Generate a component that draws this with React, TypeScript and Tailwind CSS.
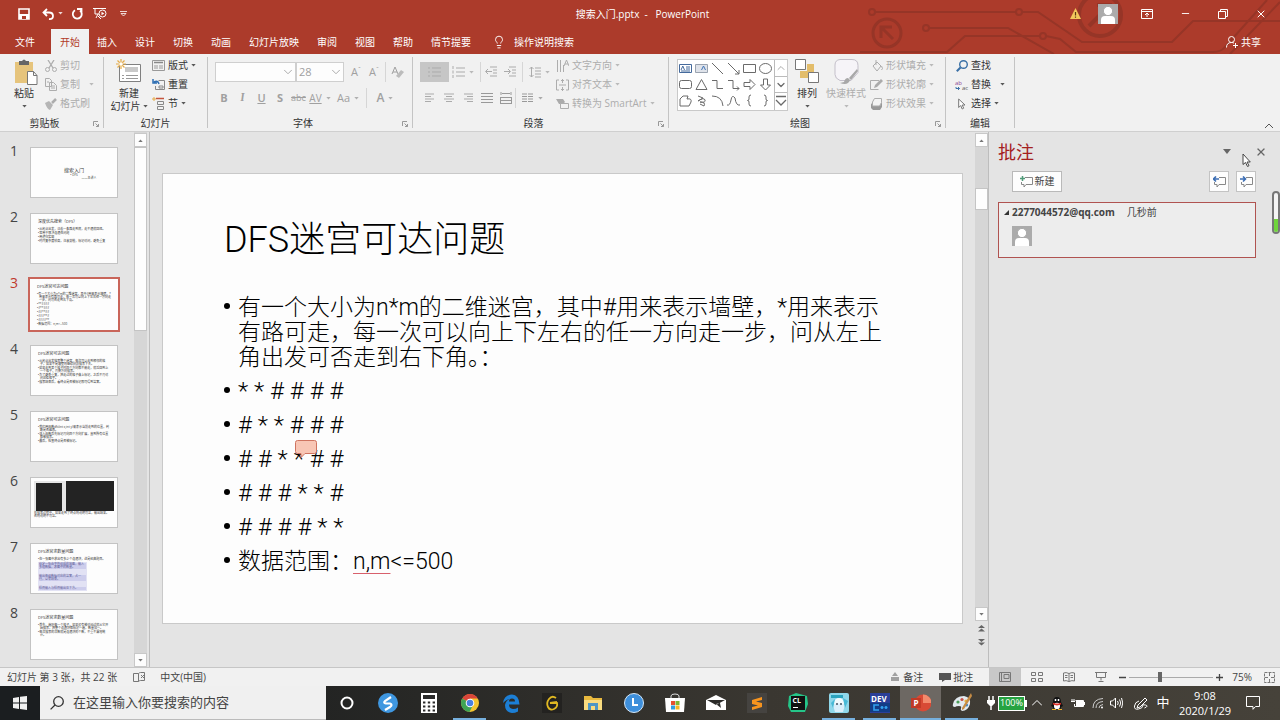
import { useState, type ReactNode } from "react";
import { ChevronDown, ChevronUp, Lightbulb, Minus, Search, X } from "lucide-react";

const tabs = ["文件", "开始", "插入", "设计", "切换", "动画", "幻灯片放映", "审阅", "视图", "帮助", "情节提要"];

const maze = ["* * # # # #", "# * * # # #", "# # * * # #", "# # # * * #", "# # # # * *"];

type Thumb = { title?: string; lines?: string[]; kind?: "cover" | "code" | "quote" };

const thumbs: Thumb[] = [
  { kind: "cover", title: "搜索入门" },
  { title: "深度优先搜索（DFS）", lines: ["从起点出发，沿着一条路走到底，走不通就回退。", "常用于解决连通性问题", "用递归实现", "时间复杂度较高，注意剪枝，标记访问，避免重复"] },
  {
    title: "DFS迷宫可达问题",
    lines: ["有一个大小为n*m的二维迷宫，其中#用来表示墙壁，*用来表示有路可走，每一次可以向上下左右任一方向走一步，问可否走到右下角。", "**####", "#**###", "##**##", "###**#", "####**", "数据范围：n,m<=500"],
  },
  {
    title: "DFS迷宫可达问题",
    lines: ["从起点出发搜索整个迷宫，每次可以走到相邻的格子，如果不是墙壁则继续向前搜索下去。", "如果走到某个格子时四个方向都不能走，就返回到上一个格子，再换方向搜索。", "为了避免重复，把走过的格子做上标记，之后不再访问这些格子。", "搜索结束后，看终点是否被标记即可得到答案。"],
  },
  { title: "DFS迷宫可达问题", lines: ["我们用函数dfs(int x,int y)来表示当前走到的位置，判断是否越界。", "进入函数后先标记再向四个方向扩展，直到所有位置都被搜索。", "最后，检查终点是否被标记。"] },
  { kind: "code" },
  { kind: "quote", title: "DFS迷宫求数量问题", lines: ["在一张图中求出有多少个连通块，这是经典题目。"] },
  { title: "DFS迷宫求数量问题", lines: ["首先，遍历每一个格子，如果没有被访问过就从它开始搜索，把整个连通块都标记一遍，数量加一。", "每次搜索的次数就是连通块的个数，不重不漏地统计。"] },
];

function Svg({ w, h, vb, children, className = "" }: { w: number; h: number; vb?: string; children: ReactNode; className?: string }) {
  return (
    <svg width={w} height={h} viewBox={vb ?? `0 0 ${w} ${h}`} fill="none" stroke="currentColor" aria-hidden="true" className={`shrink-0 ${className}`}>
      {children}
    </svg>
  );
}

function Caret({ className = "" }: { className?: string }) {
  return (
    <Svg w={5} h={3} className={className}>
      <path d="M.3 0h4.400L2.500 2.600z" fill="currentColor" fillOpacity=".8" stroke="none" />
    </Svg>
  );
}

function Person({ className = "" }: { className?: string }) {
  return (
    <Svg w={20} h={20} className={className}>
      <path d="M0 0h20v20H0z" fill="#ababab" stroke="none" />
      <path d="M3 20v-4q0-4 4-4h6q4 0 4 4v4z" fill="#fff" stroke="none" />
      <circle cx="10" cy="7" r="4.600" fill="#fff" stroke="#ababab" />
    </Svg>
  );
}

function Circuit() {
  return (
    <svg className="absolute right-0 top-0 h-full" width="440" height="54" viewBox="0 0 440 54" fill="none" stroke="#963527" strokeWidth="2" aria-hidden="true">
      <circle cx="32" cy="12" r="3" />
      <path d="M35 12h141M182 12h16l44 30h90l21-21h87" />
      <circle cx="179" cy="12" r="3" />
      <circle cx="86" cy="28" r="3" />
      <path d="M89 28h79l46 26M20 52h87l18-16h75M206 36l14 3 16 13h137q8 0 12-5L427 0M390 54l50-52" />
      <circle cx="203" cy="36" r="3" />
      <circle cx="47" cy="33" r="14" strokeWidth="3" />
      <path d="M41 38V27h11M41 27l12 12" strokeWidth="3" />
      <circle cx="260" cy="15" r="21" strokeWidth="4" />
      <path d="M249 26l20-20M257 5h13v13" strokeWidth="4" />
    </svg>
  );
}

function TitleBar() {
  const [active, setActive] = useState("开始");
  return (
    <header className="relative h-[54px] shrink-0 bg-[#ac3b2b] text-white">
      <Circuit />
      <div className="relative flex h-[27px] items-center">
        <div className="flex flex-1 items-center pl-[18px]">
          <button aria-label="保存"><Svg w={12} h={12}><path d="M1 1h10v10H1z" strokeWidth="1.600" /><path d="M1 6h10v5H1z" fill="currentColor" stroke="none" /><path d="M4 8h4v3H4z" fill="#ac3b2b" stroke="none" /></Svg></button>
          <button aria-label="撤消" className="ml-3 flex items-center gap-1"><Svg w={12} h={12}><path d="M5 1L1.500 4.500L5 8M2 4.500h5q4 0 4 3.500t-4 3" strokeWidth="1.800" /></Svg><Caret /></button>
          <button aria-label="重复" className="ml-2"><Svg w={12} h={12}><path d="M4 2.200A4.500 4.500 0 1 0 9 2.500M6 1h4.500v4.500" strokeWidth="1.800" /></Svg></button>
          <button aria-label="从头开始" className="ml-[10px]"><Svg w={15} h={13}><path d="M0 1.500h13M2 2v5h4M5 7l-2 4M5 9l3 3" /><circle cx="9.500" cy="6.500" r="3.500" /><path d="M8.500 4.800v3.400l2.800-1.700z" fill="currentColor" stroke="none" /></Svg></button>
          <button aria-label="自定义快速访问工具栏" className="ml-3"><Svg w={7} h={6}><path d="M0 .5h7M1 2.500h5l-2.500 2.500z" strokeWidth=".8" /></Svg></button>
        </div>
        <h1 className="text-[10px] leading-4">搜索入门.pptx&nbsp; -&nbsp;&nbsp; PowerPoint</h1>
        <div className="flex flex-1 items-center justify-end pr-[13px]">
          <button aria-label="警告"><Svg w={11} h={11}><path d="M5.500 0L11 11H0z" fill="#f2c75c" stroke="none" /><path d="M5.500 4v3.500M5.500 8.500v1.200" stroke="#5a3a10" strokeWidth="1.200" /></Svg></button>
          <button aria-label="帐户" className="ml-[17px]"><Person /></button>
          <button aria-label="功能区显示选项" className="ml-[23px]"><Svg w={12} h={10}><path d="M.5.500h11v9H.5zM.5 2.500h11M6 8V4.500M4 6l2-2 2 2" /></Svg></button>
          <button aria-label="最小化" className="ml-[27px]"><Minus size={11} strokeWidth={2} /></button>
          <button aria-label="还原" className="ml-[27px]"><Svg w={10} h={10}><path d="M.5 2.500h7v7h-7zM2.500 2.500v-2h7v7h-2" /></Svg></button>
          <button aria-label="关闭" className="ml-[27px]"><X size={12} strokeWidth={2} /></button>
        </div>
      </div>
      <nav className="relative flex h-[27px] items-stretch pl-[6px] pt-[2px] text-[10px] leading-[22px]">
        {tabs.map((t) => (
          <button
            key={t}
            onClick={() => setActive(t)}
            className={`px-[9px] ${t === active ? "mx-[-1px] bg-[#f1f1f1] text-[#b23a28]" : ""} ${t === "文件" ? "mr-[8px]" : ""}`}
          >
            {t}
          </button>
        ))}
        <button className="ml-3 flex items-center gap-2">
          <Lightbulb size={14} strokeWidth={1.6} />
          操作说明搜索
        </button>
        <button className="ml-auto mr-[19px] flex items-center gap-[3px]">
          <Svg w={12} h={12}><circle cx="5.500" cy="3.500" r="3" /><path d="M.5 11.500q0-5 5-5 1.500 0 2.500.7M9.500 7v5M7 9.500h5" /></Svg>
          共享
        </button>
      </nav>
    </header>
  );
}

function Group({ label, launcher = false, className, children }: { label: string; launcher?: boolean; className: string; children: ReactNode }) {
  return (
    <section aria-label={label} className={`flex shrink-0 pt-[2px] ${className}`}>
      <div className="flex min-w-0 flex-1 flex-col justify-between">
        <div className="flex h-[57px]">{children}</div>
        <div className="flex h-[15px] items-center leading-[15px] text-[#333]">
          <span className="flex-1 text-center">{label}</span>
          {launcher && (
            <button aria-label={`${label}设置`} className="flex w-[14px] justify-end pr-1 text-[#999]">
              <Svg w={6} h={6}><path d="M.5 5V.500H5M2.500 2.500l3 3M5.500 3v2.500H3" /></Svg>
            </button>
          )}
        </div>
      </div>
      <div className="mb-[3px] mt-[1px] w-px bg-[#c4c4c4]" />
    </section>
  );
}

function Item({ icon, label, caret, wide, off }: { icon: ReactNode; label: string; caret?: boolean; wide?: boolean; off?: boolean }) {
  return (
    <button className={`flex h-[19px] items-center whitespace-nowrap ${off ? "text-[#adadad]" : "text-[#333]"}`}>
      <span className="mr-[3px] flex w-[13px] justify-center">{icon}</span>
      {label}
      {caret && <Caret className={wide ? "ml-[9px]" : "ml-[3px]"} />}
    </button>
  );
}

function Big({ icon, label, second, off, className }: { icon: ReactNode; label: string; second?: string; off?: boolean; className: string }) {
  return (
    <button className={`flex flex-col items-center whitespace-nowrap pt-[3px] leading-[13px] ${off ? "text-[#adadad]" : "text-[#333]"} ${className}`}>
      <span className="flex h-[28px] items-start">{icon}</span>
      {label}
      <span className="flex h-[13px] items-center gap-[2px]">
        {second}
        <Caret />
      </span>
    </button>
  );
}

function Sep() {
  return <div className="h-5 w-px shrink-0 bg-[#d6d6d6]" />;
}

function Tool({ label, className = "", children }: { label: string; className?: string; children: ReactNode }) {
  return (
    <button aria-label={label} className={`flex h-5 shrink-0 items-center justify-center gap-1 ${className}`}>
      {children}
    </button>
  );
}

const lines = (d: string, w = 12) => <Svg w={w} h={12}><path d={d} /></Svg>;

const shapes: [string, string][] = [
  ["直线", "M2 2l11 11"],
  ["箭头", "M2 2l11 11M13 9v4H9"],
  ["矩形", "M1.500 3.500h12v8h-12z"],
  ["椭圆", "M1.500 7.500a6 5 0 1 0 12 0a6 5 0 1 0-12 0"],
  ["圆角矩形", "M3.500 3.500h8q2 0 2 2v4q0 2-2 2h-8q-2 0-2-2v-4q0-2 2-2z"],
  ["三角形", "M7.500 2.500l5.500 10H2z"],
  ["肘形连接符", "M2 3.500h5v8h6"],
  ["肘形箭头", "M2 3.500h5v8h6M11 9.500l2 2-2 2"],
  ["右箭头", "M2 5.500h6v-3l5 5-5 5v-3H2z"],
  ["下箭头", "M5.500 2v6h-3l5 5 5-5h-3V2z"],
  ["任意多边形", "M2 6l3-3h5l-1 3q5-1 4 3l-2 4H2z"],
  ["自由曲线", "M4 3l5 2-5 3q6-4 7-1t-5 2q6 0 4 4L6 11"],
  ["弧形", "M2 3q10 0 11 10"],
  ["曲线", "M1 12q3 1 4-5t4-2q1 8 5 7"],
  ["左大括号", "M9 2q-2 0-2 2v2q0 1.500-1.500 1.500Q7 7.500 7 9v2q0 2 2 2"],
  ["右大括号", "M6 2q2 0 2 2v2q0 1.500 1.500 1.500Q8 7.500 8 9v2q0 2-2 2"],
];

function FontGroup() {
  return (
    <Group label="字体" launcher className="w-[205px]">
      <div className="flex flex-col gap-[6px] pl-[7px] pt-[6px] text-[#a0a0a0]">
        <div className="flex items-center">
          <div className="relative h-5 w-[81px] border border-[#cfcfcf] bg-[#fdfdfd]">
            <input aria-label="字体" className="h-full w-full bg-transparent px-1 outline-none" />
            <ChevronDown size={14} strokeWidth={1.5} className="absolute right-0 top-[2px]" />
          </div>
          <div className="relative h-5 w-12 border border-[#cfcfcf] bg-[#fdfdfd]">
            <select aria-label="字号" defaultValue="28" className="h-full w-full appearance-none bg-transparent px-[2px] text-[11px] outline-none">
              <option>28</option>
              <option>36</option>
            </select>
            <ChevronDown size={14} strokeWidth={1.5} className="pointer-events-none absolute right-0 top-[2px]" />
          </div>
          <Tool label="增大字号" className="ml-[5px] w-[14px]"><span className="text-[11px]">A<sup className="text-[7px]">ˆ</sup></span></Tool>
          <Tool label="减小字号" className="ml-1 w-[14px]"><span className="text-[11px]">A<sup className="text-[7px]">ˇ</sup></span></Tool>
          <div className="ml-1"><Sep /></div>
          <Tool label="清除格式" className="ml-[5px]">
            <Svg w={13} h={13}><path d="M1 8l3-7 3 7M2 6h4" /><path d="M5 10l5-6 3 2-5 6z" fill="#bcbcbc" stroke="none" /></Svg>
          </Tool>
        </div>
        <div className="flex items-center text-[11px]">
          <Tool label="加粗" className="w-[18px]"><b>B</b></Tool>
          <Tool label="倾斜" className="w-[19px]"><i className="font-serif font-bold">I</i></Tool>
          <Tool label="下划线" className="w-[19px]"><u className="font-semibold">U</u></Tool>
          <Tool label="文字阴影" className="w-[18px]"><b>S</b></Tool>
          <Tool label="删除线" className="w-[19px]"><s className="text-[9px]">abc</s></Tool>
          <Tool label="字符间距" className="w-[24px]"><u className="text-[10px]">AV</u><Caret /></Tool>
          <Tool label="更改大小写" className="ml-[4px] w-[24px]"><span>Aa</span><Caret /></Tool>
          <div className="ml-[6px]"><Sep /></div>
          <Tool label="字体颜色" className="ml-[6px] w-[24px]"><span className="text-xs font-semibold">A</span><Caret /></Tool>
        </div>
      </div>
    </Group>
  );
}

function ParagraphGroup() {
  return (
    <Group label="段落" launcher className="w-[256px]">
      <div className="flex w-[137px] flex-col gap-[6px] pl-[7px] pt-[6px] text-[#ababab]">
        <div className="flex items-center">
          <Tool label="项目符号" className="w-[29px] bg-[#c6c6c6]">{lines("M0 2h2M4 2h9M0 6h2M4 6h9M0 10h2M4 10h9", 13)}</Tool>
          <Tool label="编号" className="ml-[3px]">{lines("M1 0v3M4 2h9M1 4.500v3M4 6h9M1 9v3M4 10h9", 13)}<Caret /></Tool>
          <div className="ml-[6px]"><Sep /></div>
          <Tool label="减少缩进" className="ml-1">{lines("M5 1h7M8 4h4M8 7h4M5 10h7M7 5.500H1M3 3L.5 5.500 3 8")}</Tool>
          <Tool label="增加缩进" className="ml-[7px]">{lines("M5 1h7M8 4h4M8 7h4M5 10h7M0 5.500h6M4 3l2.500 2.500L4 8")}</Tool>
          <div className="ml-[6px]"><Sep /></div>
          <Tool label="行距" className="ml-[6px]">{lines("M2.500 1v10M.5 3l2-2 2 2M.5 9l2 2 2-2M6 2h6M6 5h6M6 8h6M6 11h6")}<Caret /></Tool>
        </div>
        <div className="flex items-center">
          <Tool label="左对齐" className="w-[19px]">{lines("M1 2h9M1 4.500h6M1 7h9M1 9.500h6")}</Tool>
          <Tool label="居中" className="w-[19px]">{lines("M1 2h10M3 4.500h6M1 7h10M3 9.500h6")}</Tool>
          <Tool label="右对齐" className="w-[19px]">{lines("M2 2h9M5 4.500h6M2 7h9M5 9.500h6")}</Tool>
          <Tool label="两端对齐" className="w-[19px] text-[#999]">{lines("M0 1.500h12M0 4.500h12M0 7.500h12M0 10.500h12")}</Tool>
          <Tool label="分散对齐" className="w-[19px] text-[#999]">{lines("M1 0v3M11 0v3M2 1.500h8M0 5.500h12M0 8.500h12M0 11.500h12M.5 5v7M11.500 5v7")}</Tool>
          <Sep />
          <Tool label="分栏" className="ml-[6px] text-[#999]">{lines("M0 2h5M6 2h5M0 4.500h5M6 4.500h5M0 7h5M6 7h5M0 9.500h5M6 9.500h5")}<Caret /></Tool>
        </div>
      </div>
      <div className="flex flex-col pl-[6px]">
        <Item off caret label="文字方向" icon={<Svg w={13} h={12}><path d="M1.500 0v12M4.500 0v12M7.500 5v7M8 6l2.500-6L13 6M9 4h3" /></Svg>} />
        <Item off caret label="对齐文本" icon={<Svg w={13} h={12}><path d="M3 1H.5v10H3M10 1h2.500v10H10M6.500 0v4M6.500 8v4M5 2l1.500-1.500L8 2M5 10l1.500 1.500L8 10M3 6h7" /></Svg>} />
        <Item off caret label="转换为 SmartArt" icon={<Svg w={13} h={12}><path d="M0 1h7l2 3-2 2H3z" fill="#ababab" stroke="none" /><path d="M4.500 5.500h8v5h-8z" fill="#f1f1f1" /></Svg>} />
      </div>
    </Group>
  );
}

function DrawingGroup() {
  return (
    <Group label="绘图" launcher className="w-[277px]">
      <div className="ml-2 mt-[3px] flex h-[52px] border border-[#c9c9c9] bg-white text-[#6a6a6a]">
        <div className="grid grid-cols-6 content-start">
          <button aria-label="文本框" className="h-[16px] w-[16px]"><Svg w={15} h={15}><path d="M1.500 3.500h12v8h-12zM8 6h4M8 8h4M3 10h9M3 9l1.800-4L6.500 9" stroke="#456a9c" /></Svg></button>
          <button aria-label="竖排文本框" className="h-[16px] w-[16px]"><Svg w={15} h={15}><path d="M1.500 3.500h12v8h-12z" fill="#dfe3ea" stroke="#9aa3b0" /><path d="M7.500 9l2-4 2 4" stroke="#3f74b8" /></Svg></button>
          {shapes.map(([name, d]) => (
            <button key={name} aria-label={name} className="h-[16px] w-[16px]">
              <Svg w={15} h={15}><path d={d} /></Svg>
            </button>
          ))}
        </div>
        <div className="flex w-[13px] flex-col items-center divide-y divide-[#bbb] border-l border-[#bbb]">
          <button aria-label="上一行" className="h-[17px] w-full text-[#aaa]"><ChevronUp size={12} strokeWidth={2} /></button>
          <button aria-label="下一行" className="h-[16px] w-full"><ChevronDown size={12} strokeWidth={2.5} /></button>
          <button aria-label="其他" className="h-[17px] w-full"><Svg w={12} h={14}><path d="M1 1.500h10M1 5l5 5 5-5" strokeWidth="1.300" /></Svg></button>
        </div>
      </div>
      <Big className="ml-[3px] w-[32px]" label="排列" icon={
        <Svg w={24} h={24}><path d="M12 5h7v8h-7zM5 12h8v7H5z" fill="#e3bd6a" stroke="none" /><path d="M.5.500h10v10H.5zM13.500 13.500h10v10h-10z" fill="#fff" stroke="#777" /></Svg>
      } />
      <Big off className="w-[46px]" label="快速样式" icon={
        <Svg w={25} h={26}><path d="M6 .5h12q6 0 6 6v7l-7 8H6q-5-2-5-6V6q0-5 5-5.500z" fill="#f6f4f8" stroke="#c3bfc9" /><path d="M23 10l-8 9 2 2 7-9zM14 19q-3 0-4 4l-4 1q8 3 10-3z" fill="#a8a8a8" stroke="none" /></Svg>
      } />
      <div className="ml-px flex flex-col">
        <Item off caret label="形状填充" icon={<Svg w={12} h={12}><path d="M2 6l4-4 4 4-4 5zM5 0v5M10.500 6q2 3 0 4" /></Svg>} />
        <Item off caret label="形状轮廓" icon={<Svg w={13} h={12}><path d="M9 1.500H.5v9h8" /><path d="M4 9l1-3 6-6 2 2-6 6z" fill="#ababab" stroke="none" /></Svg>} />
        <Item off caret label="形状效果" icon={<Svg w={13} h={12}><path d="M1 5v5l2 2h7l2-3V3l-2 5H3z" fill="#999" stroke="none" /><path d="M4.500.5h7v4l-2 3.500h-7v-4z" fill="#f4f4f4" /></Svg>} />
      </div>
    </Group>
  );
}

function Ribbon() {
  return (
    <div className="flex h-[78px] shrink-0 border-b border-[#cfcfcf] bg-[#f1f1f1] text-[10px]">
      <Group label="剪贴板" launcher className="w-[104px]">
        <Big className="ml-2 w-[32px]" label="粘贴" icon={
          <Svg w={24} h={26} className="ml-1"><path d="M1 3h18v21H1z" fill="#e6c47c" stroke="none" /><path d="M5 2h3q2-3 4 0h3v4H5z" fill="#666" stroke="none" /><path d="M13.500 12.500h6l3.500 4v9h-9.500z" fill="#fff" stroke="#777" /><path d="M19.500 12.500v4H23" stroke="#777" /></Svg>
        } />
        <div className="ml-1 flex flex-col">
          <Item off label="剪切" icon={<Svg w={12} h={12}><path d="M3 0l5 8M9 0L4 8" strokeWidth="1.300" /><circle cx="2.500" cy="9.500" r="2" /><circle cx="9.500" cy="9.500" r="2" /></Svg>} />
          <Item off caret wide label="复制" icon={<Svg w={12} h={13}><path d="M.5.500h4l2 2v6h-6zM4.500 4.500h4l3 3v5h-7zM6 8h4M6 10h4M2 4h2" /></Svg>} />
          <Item off label="格式刷" icon={<Svg w={12} h={12}><path d="M0 5l4-2 4 4-3 5q-3-1-5-7z" fill="#b5b5b5" stroke="none" /><path d="M7 5l4-4" strokeWidth="2.500" /></Svg>} />
        </div>
      </Group>
      <Group label="幻灯片" className="w-[104px]">
        <Big className="ml-[5px] w-[40px]" label="新建" second="幻灯片" icon={
          <Svg w={26} h={24}><path d="M3.500 5.500h21v17h-21z" fill="#fff" stroke="#808080" /><path d="M9 8h13v5H9z" fill="#c9c9c9" stroke="none" /><path d="M6 16.500h2M10 16.500h12M6 19.500h2M10 19.500h12" stroke="#999" /><path d="M5 0v10M0 5h10M1.500 1.500l7 7M8.500 1.500l-7 7" stroke="#e5ab48" strokeWidth="1.200" /><circle cx="5" cy="5" r="1.800" fill="#fff" stroke="none" /></Svg>
        } />
        <div className="ml-[3px] flex flex-col">
          <Item caret label="版式" icon={<Svg w={13} h={11}><path d="M.5.500h12v10H.5z" stroke="#999" /><path d="M2 2.500h9" stroke="#888" strokeWidth="1.500" /><path d="M2 5h4v4H2zM7 5h4v4H7z" fill="#c6c6c6" stroke="none" /></Svg>} />
          <Item label="重置" icon={<Svg w={13} h={12}><path d="M6.500 1.500h6v9h-9V7M7 7h4v2H7z" stroke="#888" /><path d="M7 5q-1-4-5-2M1 0v4h4" stroke="#2f6fb3" strokeWidth="1.500" /></Svg>} />
          <Item caret label="节" icon={<Svg w={13} h={13}><path d="M5.500 4.500h6v3h-6zM5.500 9.500h6v3h-6z" stroke="#888" /><path d="M4 1.500h8" stroke="#c5543c" strokeWidth="1.500" /><path d="M2 0v4M0 2h4" stroke="#e5ab48" /></Svg>} />
        </div>
      </Group>
      <FontGroup />
      <ParagraphGroup />
      <DrawingGroup />
      <Group label="编辑" className="w-[69px]">
        <div className="ml-[9px] flex flex-col">
          <Item label="查找" icon={<Svg w={12} h={12}><circle cx="7.500" cy="4.500" r="3.800" stroke="#3a70a6" strokeWidth="1.400" /><path d="M4.500 7.500L.8 11.200" stroke="#3a70a6" strokeWidth="2" /></Svg>} />
          <Item caret wide label="替换" icon={
            <Svg w={14} h={12} className="overflow-visible"><text x="0" y="6" fontSize="6" fill="#8a4c96" stroke="none">ab</text><text x="7" y="11" fontSize="6" fill="#555" stroke="none">ac</text><path d="M1 8v1.500h3.500M3 8l1.500 1.500L3 11" stroke="#3a70a6" /></Svg>
          } />
          <Item caret label="选择" icon={<Svg w={8} h={12}><path d="M.7 1v8.500l2-2 1.500 3.500 1.500-.8-1.500-3.200h2.800z" stroke="#777" fill="#fff" /></Svg>} />
        </div>
      </Group>
      <button aria-label="折叠功能区" className="mb-[2px] ml-auto mr-[6px] self-end text-[#555]">
        <Svg w={10} h={6}><path d="M1 5l4-4 4 4" /></Svg>
      </button>
    </div>
  );
}

function ArrowBtn({ dir }: { dir: "up" | "down" }) {
  return (
    <button aria-label={dir === "up" ? "向上滚动" : "向下滚动"} className="flex h-[14px] w-full shrink-0 items-center justify-center border border-[#c8c8c8] bg-[#fdfdfd] text-[#555]">
      <Caret className={dir === "up" ? "rotate-180" : ""} />
    </button>
  );
}

function ThumbCard({ t, selected }: { t: Thumb; selected: boolean }) {
  return (
    <span className={`block h-[51px] w-[88px] shrink-0 overflow-hidden bg-[#fdfdfd] text-left text-[3px] leading-[3px] text-[#333] ${selected ? "outline-2 outline-[#c9655a]" : "border border-[#c3c3c3]"}`}>
      {t.kind === "cover" && (
        <span className="flex flex-col items-center pt-[19px]">
          <span className="text-[5px] leading-[6px]">{t.title}</span>
          <span className="mt-px">• DFS</span>
          <span className="ml-[30px]">——主讲人</span>
        </span>
      )}
      {t.kind === "code" && (
        <span className="block px-[3px] pt-[3px]">
          <span className="flex items-end gap-1 bg-[#e6e6e6] pl-[2px]">
            <span className="h-[28px] w-[26px] bg-[#232323]" />
            <span className="h-[30px] flex-1 bg-[#232323]" />
          </span>
          <span className="mt-px block">在搜索过程中，如果走到了终点则说明可达，输出结果。</span>
          <span className="block">否则说明不可达。</span>
        </span>
      )}
      {t.kind !== "cover" && t.kind !== "code" && (
        <span className="block px-[7px] pt-[5px]">
          <span className="mb-[4px] block text-[4px] leading-[5px]">{t.title}</span>
          {t.lines?.map((l, i) => (
            <span key={i} className="mb-px block pl-[2px] -indent-[2px]">•{l}</span>
          ))}
          {t.kind === "quote" && (
            <span className="flex h-[29px] w-[49px] flex-col justify-between bg-[#e2e2f4] p-px text-[#5a5a96]">
              <span className="bg-[#cdcdec]">给定一张由字符组成的地图，输入多组数据，求图中的数量。</span>
              <span className="bg-[#cdcdec]">输出每组数据对应的答案，占一行，以零结束。</span>
              <span className="bg-[#cdcdec]">样例输入与样例输出见下方。</span>
            </span>
          )}
        </span>
      )}
    </span>
  );
}

function Thumbnails() {
  const [current, setCurrent] = useState(2);
  return (
    <aside className="flex w-[150px] shrink-0 border-r border-[#bdbdbd]">
      <ol className="flex flex-1 flex-col gap-[15px] overflow-hidden pt-[15px]">
        {thumbs.map((t, i) => (
          <li key={i}>
            <button onClick={() => setCurrent(i)} className="flex items-start">
              <span className={`-mt-[6px] w-[30px] shrink-0 pl-[10px] text-left text-sm ${i === current ? "text-[#c0392b]" : "text-[#444]"}`}>{i + 1}</span>
              <ThumbCard t={t} selected={i === current} />
            </button>
          </li>
        ))}
      </ol>
      <div className="mr-[2px] flex w-[13px] flex-col bg-[#d6d6d6] pt-px">
        <ArrowBtn dir="up" />
        <div className="h-[184px] border border-[#c4c4c4] bg-[#fdfdfd]" />
        <div className="flex-1" />
        <ArrowBtn dir="down" />
      </div>
    </aside>
  );
}

function Bullet({ className = "", children }: { className?: string; children: ReactNode }) {
  return (
    <li className="flex">
      <span className="mr-2 mt-[8px] size-[6px] shrink-0 rounded-full bg-black" />
      <p className={className}>{children}</p>
    </li>
  );
}

function Slide() {
  return (
    <main className="min-w-0 flex-1 pl-[12px] pr-[12px] pt-[41px]">
      <article className="relative aspect-video w-full border border-[#c9c9c9] bg-[#fdfdfd] px-[61px] pt-[41px] font-['Roboto','Noto_Sans_CJK_SC',sans-serif] font-light text-black">
        <h2 className="text-4xl leading-[50px]">DFS迷宫可达问题</h2>
        <ul className="mt-[30px] flex flex-col gap-[9px] text-[23px] leading-[25px]">
          <Bullet>
            有一个大小为n*m的二维迷宫，其中#用来表示墙壁，*用来表示
            <br />
            有路可走，每一次可以向上下左右的任一方向走一步，问从左上
            <br />
            角出发可否走到右下角。：
          </Bullet>
          {maze.map((row) => (
            <Bullet key={row} className="text-2xl leading-[25px]">{row}</Bullet>
          ))}
          <Bullet>
            数据范围：<span className="underline decoration-[#d8606c] decoration-1 underline-offset-4">n,m</span>&lt;=500
          </Bullet>
        </ul>
        {/* comment marker */}
        <button aria-label="批注标记" className="absolute left-[132px] top-[266px]">
          <Svg w={22} h={19}><path d="M2.500.500h17q2 0 2 2v9q0 2-2 2H10l-4 4v-4H2.500q-2 0-2-2v-9q0-2 2-2z" fill="#f8c6b5" stroke="#cf7460" /></Svg>
        </button>
      </article>
    </main>
  );
}

function Comments() {
  return (
    <aside aria-label="批注" className="relative flex w-[292px] shrink-0 flex-col border-l border-[#bdbdbd] pl-[9px] pr-[24px] text-[10px] text-[#444]">
      <div className="flex h-[39px] items-center">
        <h2 className="flex-1 text-lg leading-6 text-[#a4201f]">批注</h2>
        <button aria-label="任务窗格选项"><Svg w={8} h={5}><path d="M0 0h8L4 5z" fill="#666" stroke="none" /></Svg></button>
        <button aria-label="关闭窗格" className="-mr-[11px] ml-6 text-[#666]"><X size={12} strokeWidth={2.5} /></button>
      </div>
      <div className="flex gap-[7px] pl-[14px]">
        <button className="mr-auto flex h-[21px] w-[50px] items-center justify-center gap-[2px] border border-[#b9b9b9] bg-[#fdfdfd]">
          <Svg w={13} h={12}><path d="M5 1.500h7.500v7H6l-2 2.500v-2.500H1.500V6" stroke="#888" /><path d="M2.500 0v5M0 2.500h5" stroke="#4f9a78" strokeWidth="1.500" /></Svg>
          新建
        </button>
        {["上一条", "下一条"].map((n, i) => (
          <button key={n} aria-label={n} className="flex h-[21px] w-[20px] items-center justify-center border border-[#c3c3c3] bg-[#fdfdfd]">
            <Svg w={13} h={12}><path d="M6 1.500h6.500v7H6l-2 2.500v-2.500H1.500V6" stroke="#888" /><path d={i ? "M0 3h5M3 .5L5.500 3 3 5.500" : "M1 3h5M3 .5L.5 3 3 5.500"} stroke="#3c6eb4" strokeWidth="1.600" /></Svg>
          </button>
        ))}
      </div>
      <article className="mt-[10px] h-[56px] border border-[#b05350] bg-[#ededed] pl-[5px] pt-px">
        <div className="flex items-center leading-4">
          <Svg w={5} h={5} className="mr-[3px]"><path d="M5 0v5H0z" fill="#333" stroke="none" /></Svg>
          <b>2277044572@qq.com</b>
          <span className="ml-3">几秒前</span>
        </div>
        <Person className="ml-2 mt-[6px]" />
      </article>
      {/* floating level meter and mouse pointer */}
      <div className="absolute right-0 top-[59px] flex h-[43px] w-[8px] flex-col justify-end rounded-full border-2 border-[#777] bg-[#f4f4f4]">
        <div className="h-[13px] rounded-b-full bg-[#6fd43c]" />
      </div>
      <Svg w={9} h={14} className="absolute right-[29px] top-[21px]"><path d="M1 1v10.500l2.500-2 2 4 1.500-.8-2-3.700h3.300z" fill="#fff" stroke="#444" /></Svg>
    </aside>
  );
}

function StatusBar() {
  const [zoom, setZoom] = useState(75);
  const views: [string, string][] = [
    ["普通视图", "M.5.500h11v9H.5zM2.500.5v9M5 2.500h5v4H5z"],
    ["幻灯片浏览", "M.5.500h4v3h-4zM7.500.500h4v3h-4zM.5 6.500h4v3h-4zM7.500 6.500h4v3h-4z"],
    ["阅读视图", "M6 1.500Q3 0 .5 1v8Q3 8 6 9.500 9 8 11.500 9V1Q9 0 6 1.500v8M2 3.500h2.500M2 5.500h2.500M7.500 3.500H10M7.500 5.500H10"],
    ["幻灯片放映", "M0 .5h12M1.500.5v5h9v-5M6 5.500v3M3.500 9.500h5"],
  ];
  return (
    <footer className="flex h-[19px] shrink-0 items-stretch border-t border-[#c6c6c6] bg-[#f1f1f1] pl-[7px] text-[10px] leading-[18px] text-[#444]">
      <span>幻灯片 第 3 张，共 22 张</span>
      <button aria-label="拼写检查" className="ml-4 self-center text-[#777]"><Svg w={12} h={10}><path d="M5.500 1.500v8H.5v-8h5q1-1 2-1h4v8h-4q-1 0-2 1M8 3l3 3M11 3L8 6" /></Svg></button>
      <button className="ml-[15px]">中文(中国)</button>
      <button className="ml-auto flex items-center gap-[3px]"><Svg w={10} h={10}><path d="M5 0l3 4H2zM1 5h8v4H1z" fill="#a0a0a0" stroke="none" /></Svg>备注</button>
      <button className="ml-[16px] flex items-center gap-[2px]"><Svg w={12} h={10}><path d="M0 1h12v7H6L3 10V8H0z" fill="#555" stroke="none" /></Svg>批注</button>
      <div className="ml-[16px] flex">
        {views.map(([name, d], i) => (
          <button key={name} aria-label={name} className={`flex w-8 items-center justify-center text-[#777] ${i === 0 ? "bg-[#c8c8c8]" : ""}`}>
            <Svg w={12} h={10}><path d={d} /></Svg>
          </button>
        ))}
      </div>
      <button aria-label="缩小" className="ml-[2px]"><Svg w={7} h={7}><path d="M0 3.500h7" strokeWidth="1.500" /></Svg></button>
      <input
        type="range"
        aria-label="缩放"
        min={10}
        max={190}
        value={zoom}
        onChange={(e) => setZoom(Number(e.target.value))}
        className="mx-[3px] h-[10px] w-[84px] appearance-none self-center bg-[linear-gradient(#aaa,#aaa)] bg-[length:100%_1px] bg-center bg-no-repeat [&::-webkit-slider-thumb]:h-[10px] [&::-webkit-slider-thumb]:w-1 [&::-webkit-slider-thumb]:appearance-none [&::-webkit-slider-thumb]:bg-[#666]"
      />
      <button aria-label="放大"><Svg w={7} h={7}><path d="M0 3.500h7M3.500 0v7" strokeWidth="1.300" /></Svg></button>
      <span className="ml-[9px]">{zoom}%</span>
      <button aria-label="适应窗口" className="ml-3 mr-[5px] text-[#777]"><Svg w={11} h={11}><path d="M.5.500h10v10H.5zM5.500 1v3M5.500 7v3M1 5.500h3M7 5.500h3" strokeDasharray="3 1" /></Svg></button>
    </footer>
  );
}

const apps: { name: string; running?: boolean; active?: boolean; icon: ReactNode }[] = [
  { name: "Cortana", icon: <circle cx="10" cy="10" r="5.500" stroke="#fff" strokeWidth="2" /> },
  { name: "搜狗", icon: <><circle cx="10" cy="10" r="10" fill="#3f97e0" stroke="none" /><path d="M13 4L7 8q-2 2 1 2.500h4q3 1 0 3.500l-5 3" stroke="#fff" strokeWidth="2.200" /></> },
  { name: "计算器", icon: <><path d="M2 0h16v20H2z" fill="#fff" stroke="none" /><path d="M4 2h12v4H4z" fill="#2a2a2a" stroke="none" /><path d="M4 9.500h12M4 13.500h12M4 17.500h12" stroke="#2a2a2a" strokeWidth="2" strokeDasharray="2.400 2.400" /></> },
  {
    name: "Chrome", running: true,
    icon: <g stroke="none"><circle cx="10" cy="10" r="9" fill="#f4c430" /><path d="M10 10L2.200 5.500A9 9 0 0 1 17.800 5.500H10z" fill="#d9453a" /><path d="M10 10L2.200 5.500A9 9 0 0 0 9.500 19L13 12z" fill="#3fa455" /><circle cx="10" cy="10" r="4.300" fill="#fff" /><circle cx="10" cy="10" r="3.300" fill="#4a80e0" /></g>,
  },
  { name: "Edge", icon: <path d="M2 10q1-8 9-8.500 7 .5 7.500 10H8q0 4 4 4.500 3 0 5-1.500v4q-3 1.500-6 1.500-7-1-7-8 1-5 5-6-3 0-7 4zM8 8.500h6q0-3-3-3t-3 3z" fill="#1c7fd6" stroke="none" /> },
  { name: "G", icon: <><path d="M0 0h20v20H0z" fill="#232220" stroke="none" /><path d="M14 5q-4-3-7 1t-1 8 6 2 3-6H8l7-1" stroke="#e0b822" strokeWidth="1.800" /></> },
  { name: "文件资源管理器", icon: <g stroke="none"><path d="M1 3h7l2 2h9v12H1z" fill="#e9b93e" /><path d="M1 7h18v10H1z" fill="#f9dc80" /><path d="M5 10h10v7h-3v-4H8v4H5z" fill="#4e97c5" /></g> },
  { name: "时钟", icon: <><circle cx="10" cy="10" r="9.500" fill="#3e8fdb" stroke="#d4e7f8" /><path d="M9 5v7h5" stroke="#fff" strokeWidth="2" /></> },
  { name: "Microsoft Store", icon: <><path d="M6 6V3q0-2 4-2t4 2v3" stroke="#ddd" /><path d="M0 5h20l-1 14H1z" fill="#fff" stroke="none" /><path d="M6 8h4v4H6z" fill="#e6502e" stroke="none" /><path d="M10.500 8h4v4h-4z" fill="#7db733" stroke="none" /><path d="M6 12.500h4v4H6z" fill="#2f9ee0" stroke="none" /><path d="M10.500 12.500h4v4h-4z" fill="#f5b824" stroke="none" /></> },
  { name: "邮件", icon: <><path d="M0 7l10-5 10 5v10H0z" fill="#fff" stroke="none" /><path d="M1 7h18l-9 5zM10 11l5 4-1-5z" fill="#2b2a28" stroke="none" /></> },
  { name: "Sublime Text", icon: <><path d="M0 0h20v20H0z" fill="#454340" stroke="none" /><path d="M15 4L5 7v4l6 1.500L5 14v3l10-3v-4L9 8.500 15 7z" fill="#f7941e" stroke="none" /></> },
  { name: "CLion", icon: <><path d="M1 3l7-3 11 3 1 8-3 8H3L0 13z" fill="#25c588" stroke="none" /><path d="M3 3h14v14H3z" fill="#111" stroke="none" /><text x="4.500" y="10" fontSize="7" fontWeight="700" fill="#fff" stroke="none">CL</text><path d="M5 14.500h5" stroke="#fff" /></> },
  { name: "动漫", running: true, icon: <g stroke="none"><path d="M0 2q0-2 2-2h16q2 0 2 2v16q0 2-2 2H2q-2 0-2-2z" fill="#8fd7ea" /><path d="M2 2h12v3H2z" fill="#2ba3bd" /><circle cx="10" cy="10" r="5" fill="#f2fafd" /><path d="M4 12q6-3 12 0l-2 7H6z" fill="#d9eefa" /><path d="M14 5l5 3-3 7zM6 6l-4 4 2 5z" fill="#48b9d6" /><circle cx="8" cy="11" r="1" fill="#456" /><circle cx="12" cy="11" r="1" fill="#456" /></g> },
  { name: "Dev-C++", running: true, icon: <><path d="M0 0h20v20H0z" fill="#2b3f98" stroke="none" /><path d="M0 10h20v9H0z" fill="#123c86" stroke="none" /><text x="1" y="9" fontSize="8" fontWeight="700" fill="#fff" stroke="none">DEV</text><path d="M9 12H4v5h5M10.500 14.500h3M12 13v3M14.500 14.500h3M16 13v3" stroke="#32a0f0" strokeWidth="1.600" /></> },
  { name: "PowerPoint", running: true, active: true, icon: <><circle cx="12" cy="10" r="8.500" fill="#d84a35" stroke="none" /><path d="M12 1.500a8.500 8.500 0 0 1 8.500 8.500H12z" fill="#f28a6c" stroke="none" /><path d="M0 5h10v10H0z" fill="#c13a26" stroke="none" /><text x="2.500" y="13" fontSize="8" fontWeight="700" fill="#fff" stroke="none">P</text></> },
  { name: "画图", running: true, icon: <g stroke="none"><path d="M1 11Q3 3 12 3q7 1 6 8-2 7-8 7-2-1-1-3t-2-2-4 1q-3 0-2-3z" fill="#e2e9ee" /><circle cx="6" cy="9" r="1.600" fill="#4a9e58" /><circle cx="10" cy="6.500" r="1.600" fill="#c95145" /><circle cx="14" cy="8" r="1.600" fill="#e4b33a" /><circle cx="14.500" cy="12" r="1.600" fill="#3e86c4" /><path d="M19 0l1 3-8 13-2 1 0-2z" fill="#c68c45" /></g> },
];

function Taskbar() {
  return (
    <div className="flex h-[34px] shrink-0 items-stretch bg-linear-to-r from-[#232423] from-25% via-[#3a3731] via-60% to-[#46423a] text-white">
      <button aria-label="开始" className="flex w-10 items-center justify-center bg-[#1b1e20]">
        <Svg w={14} h={14}><path d="M0 2l6-1v5.500H0zM7 .8L14 0v6.500H7zM0 7.500h6V13l-6-1zM7 7.500h7V14l-7-1z" fill="#f0f0f0" stroke="none" /></Svg>
      </button>
      <label className="flex w-[286px] items-center gap-[9px] border-b border-[#bbb] bg-[#f0f0f0] pl-[10px] text-[#333]">
        <Svg w={14} h={14}><circle cx="8.500" cy="5.500" r="4.800" strokeWidth="1.300" /><path d="M5 9L.6 13.400" strokeWidth="1.300" /></Svg>
        <input aria-label="搜索" placeholder="在这里输入你要搜索的内容" className="min-w-0 flex-1 bg-transparent text-[13px] outline-none placeholder:text-[#444]" />
      </label>
      {apps.map((a) => (
        <button key={a.name} aria-label={a.name} className={`flex w-[41px] shrink-0 flex-col items-center ${a.active ? "bg-[#6d6863]" : ""}`}>
          <Svg w={20} h={20} className="mt-[7px]">{a.icon}</Svg>
          {a.running && <span className={`mt-auto h-[2px] bg-[#76b0de] ${a.active ? "w-full" : "w-[33px]"}`} />}
        </button>
      ))}
      <div className="ml-auto flex items-center pr-[20px]">
        <Svg w={8} h={14}><path d="M2 0v4M6 0v4M4 9v5" strokeWidth="1.500" /><path d="M0 4h8v3L5 10H3L0 7z" fill="#fff" stroke="none" /></Svg>
        <span className="ml-[3px] flex h-[15px] w-[27px] items-center justify-center border border-white bg-[#26a342] text-[9px] leading-3">100%</span>
        <span className="h-[7px] w-[2px] bg-white" />
        <button aria-label="显示隐藏的图标" className="ml-[5px]"><Svg w={10} h={6}><path d="M0 5.500l5-5 5 5" /></Svg></button>
        <button aria-label="QQ" className="ml-[9px]"><Svg w={12} h={13}><path d="M6 0q4 0 4 5l2 4-2 1q0 3-4 3T2 10L0 9l2-4Q2 0 6 0z" fill="#111" stroke="none" /><ellipse cx="6" cy="9" rx="3" ry="3.300" fill="#fff" stroke="none" /><path d="M2 6.500q4 2 8 0" stroke="#e0322a" strokeWidth="1.800" /><path d="M4.500 2v2M7.500 2v2" stroke="#fff" strokeWidth="1.500" /><path d="M1 12.500h4M7 12.500h4" stroke="#f0b428" /></Svg></button>
        <button aria-label="电池" className="ml-2"><Svg w={14} h={9}><path d="M4.500 1.500h8v6h-9V5M1 0v3M3 0v3M0 2.500h4M13.500 3v3" /><path d="M5 2h7v5H5z" fill="#fff" stroke="none" /></Svg></button>
        <button aria-label="网络" className="ml-[7px]"><Svg w={12} h={12}><path d="M1 11Q1 2 11 1.500M4 11Q4 5 11 4.500M7 11q0-3 4-3.500" stroke="#ccc" /><circle cx="10" cy="10.500" r="1" fill="#fff" stroke="none" /></Svg></button>
        <button aria-label="音量" className="ml-[6px]"><Svg w={13} h={12}><path d="M.5 4h2l3-3v10l-3-3h-2zM7.500 4q1.500 2 0 4M9.500 2.500q2.500 3.500 0 7M11.500 1q2.500 5 0 10" /></Svg></button>
        <button aria-label="Windows Ink" className="ml-[11px]"><Svg w={14} h={13}><path d="M4 8l7-7 2 2-7 7-3 1zM5 4Q1 5 .5 9t4 3 4-3 3-1-1 3" /></Svg></button>
        <button aria-label="输入法" className="ml-[8px] w-[14px] text-[13px]">中</button>
        <time className="ml-[8px] w-[54px] text-center text-[11px] leading-[15px]">9:08<br />2020/1/29</time>
        <button aria-label="通知" className="ml-[14px]"><Svg w={14} h={14}><path d="M.5.500h13v10h-4l-2.500 2.800v-2.800H.5z" /></Svg></button>
      </div>
    </div>
  );
}

export default function App() {
  return (
    <div className="flex h-screen flex-col overflow-hidden bg-[#e4e4e4] font-['Open_Sans','Noto_Sans_CJK_SC',sans-serif]">
      <TitleBar />
      <Ribbon />
      <div className="flex min-h-0 flex-1">
        <Thumbnails />
        <Slide />
        <div className="flex w-[13px] shrink-0 flex-col items-center pt-px">
          <ArrowBtn dir="up" />
          <div className="flex w-full flex-1 flex-col bg-[#d6d6d6]">
            <div className="mt-[41px] h-[22px] border border-[#c4c4c4] bg-[#fdfdfd]" />
          </div>
          <ArrowBtn dir="down" />
          <button aria-label="上一张幻灯片" className="mt-1 text-[#666]"><Svg w={7} h={7}><path d="M3.500 0L7 3H0zM3.500 3.500L7 6.500H0z" fill="currentColor" stroke="none" /></Svg></button>
          <button aria-label="下一张幻灯片" className="mb-[21px] mt-[7px] text-[#666]"><Svg w={7} h={7}><path d="M3.500 3L7 0H0zM3.500 6.500L7 3.500H0z" fill="currentColor" stroke="none" /></Svg></button>
        </div>
        <Comments />
      </div>
      <StatusBar />
      <Taskbar />
    </div>
  );
}
